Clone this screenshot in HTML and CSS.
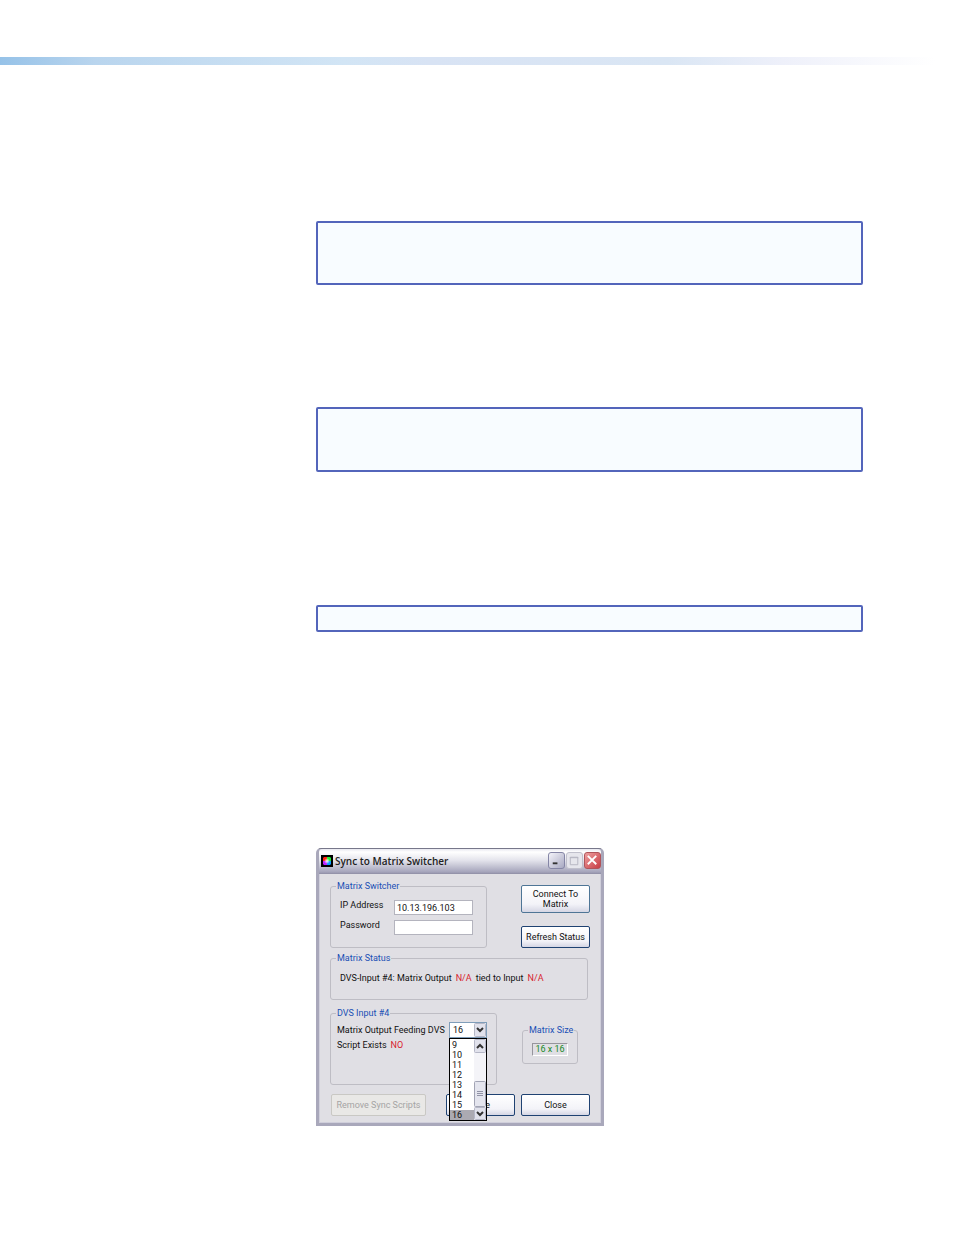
FILE: index.html
```html
<!DOCTYPE html>
<html lang="en">
<head>
    <meta charset="utf-8">
    <meta name="viewport" content="width=device-width, initial-scale=1">
    <title>Sync to Matrix Switcher</title>
    <link rel="stylesheet" href="styles.css">
</head>

<body>
    <div class="page-bar"></div>

    <main class="content">
        <div class="note"></div>
        <div class="note second"></div>
        <div class="note small"></div>

        <section class="dialog" aria-labelledby="dialog-title">
            <header class="titlebar">
                <svg class="app-icon" viewBox="0 0 12 12">
                    <defs>
                        <radialGradient id="glow">
                            <stop offset="0" stop-color="#fff"/>
                            <stop offset="1" stop-color="#fff" stop-opacity="0"/>
                        </radialGradient>
                    </defs>
                    <rect width="12" height="12" fill="#000"/>
                    <path d="M6 6V2H3L2 3v3z" fill="#f21"/>
                    <path d="M6 6V2h3l1 1v3z" fill="#2e3"/>
                    <path d="M6 6H2v3l1 1h3z" fill="#b2f"/>
                    <path d="M6 6h4v3l-1 1H6z" fill="#19f"/>
                    <circle cx="6" cy="6" r="3" fill="url(#glow)"/>
                </svg>
                <h1 id="dialog-title">Sync to Matrix Switcher</h1>
                <div class="window-buttons">
                    <button class="win-btn" type="button" aria-label="Minimize">
                        <svg viewBox="0 0 16 16"><path d="M4 11h5" stroke="#333" stroke-width="2"/></svg>
                    </button>
                    <button class="win-btn maximize" type="button" aria-label="Maximize" disabled>
                        <svg viewBox="0 0 16 16"><path d="M3.5 4.5h8v8h-8zM3 5h9" fill="none" stroke="#b4b4c0"/></svg>
                    </button>
                    <button class="win-btn close" type="button" aria-label="Close window">
                        <svg viewBox="0 0 16 16"><path d="M3 3l9 9M12 3l-9 9" stroke="#fff" stroke-width="2"/></svg>
                    </button>
                </div>
            </header>

            <form class="dialog-body">
                <div class="row">
                    <fieldset class="switcher">
                        <legend>Matrix Switcher</legend>
                        <div class="field">
                            <label for="ip">IP Address</label>
                            <input id="ip" type="text" value="10.13.196.103">
                        </div>
                        <div class="field">
                            <label for="password">Password</label>
                            <input id="password" type="password">
                        </div>
                    </fieldset>
                    <div class="actions">
                        <button class="btn connect" type="button">Connect To Matrix</button>
                        <button class="btn" type="button">Refresh Status</button>
                    </div>
                </div>

                <fieldset class="status">
                    <legend>Matrix Status</legend>
                    <p>
                        <span>DVS-Input #4: Matrix Output</span>
                        <span class="red">N/A</span>
                        <span>tied to Input</span>
                        <span class="red">N/A</span>
                    </p>
                </fieldset>

                <div class="row input-row">
                    <fieldset class="dvs">
                        <legend>DVS Input #4</legend>
                        <div class="feed">
                            <label for="output">Matrix Output Feeding DVS</label>
                            <div class="combo">
                                <select id="output">
                                    <option>16</option>
                                </select>
                                <svg class="combo-arrow" viewBox="0 0 12 14">
                                    <rect x=".5" y=".5" width="11" height="13" rx="1" fill="#e1e2ec" stroke="#b5b7c6"/>
                                    <path d="M3 5l3 3 3-3" fill="none" stroke="#333" stroke-width="2"/>
                                </svg>
                                <div class="dropdown">
                                    <ul role="listbox" aria-label="Matrix output">
                                        <li role="option">9</li>
                                        <li role="option">10</li>
                                        <li role="option">11</li>
                                        <li role="option">12</li>
                                        <li role="option">13</li>
                                        <li role="option">14</li>
                                        <li role="option">15</li>
                                        <li role="option" class="selected" aria-selected="true">16</li>
                                    </ul>
                                    <svg class="scrollbar" viewBox="0 0 12 81">
                                        <rect width="12" height="81" fill="#f4f4f8"/>
                                        <rect x=".5" y=".5" width="11" height="13" rx="1" fill="#e1e2ec" stroke="#b5b7c6"/>
                                        <path d="M3 9l3-3 3 3" fill="none" stroke="#333" stroke-width="2"/>
                                        <rect x=".5" y="42.5" width="11" height="25" rx="1" fill="#e4e5ee" stroke="#a2a4b4"/>
                                        <path d="M3 52.5h6M3 54.5h6M3 56.5h6" stroke="#9193a6"/>
                                        <rect x=".5" y="68.5" width="11" height="12" rx="1" fill="#e1e2ec" stroke="#b5b7c6"/>
                                        <path d="M3 73l3 3 3-3" fill="none" stroke="#333" stroke-width="2"/>
                                    </svg>
                                </div>
                            </div>
                        </div>
                        <p class="script">
                            <span>Script Exists</span>
                            <span class="red">NO</span>
                        </p>
                    </fieldset>
                    <fieldset class="size">
                        <legend>Matrix Size</legend>
                        <output>16 x 16</output>
                    </fieldset>
                </div>

                <div class="row buttons">
                    <button class="btn remove" type="button" disabled>Remove Sync Scripts</button>
                    <button class="btn" type="button">Save</button>
                    <button class="btn" type="button">Close</button>
                </div>
            </form>
        </section>
    </main>
</body>
</html>
```
FILE: styles.css
```css
* {
    box-sizing: border-box;
}

body {
    margin: 0;
    padding-top: 57px;
    background-color: #fff;
    font-family: Roboto, "Liberation Sans", sans-serif;
    font-size: 9px;
    line-height: 10px;
    color: #111;
}

.page-bar {
    height: 8px;
    background: linear-gradient(to right, #96c2e8 0%, #b9d5ee 10%, #d2e5f5 36%, #d8e3f4 45%, #dae6f4 70%, #eef0fa 82%, #fff 98%);
}

.content {
    padding: 156px 91px 109px 316px;
}

/* note boxes */
.note {
    height: 64px;
    margin-bottom: 122px;
    border: 2px solid #5365bb;
    border-radius: 2px;
    background-color: #f8fcff;
}

.note.second {
    height: 65px;
    margin-bottom: 133px;
}

.note.small {
    height: 27px;
    margin-bottom: 216px;
}

/* dialog window */
.dialog {
    width: 288px;
    border: 3px solid #a9a8bb;
    border-top: 1px solid #77778a;
    border-radius: 5px 5px 0 0;
    background-color: #e0dfe4;
    box-shadow: inset 0 0 0 1px #d0cfdb;
}

.titlebar {
    display: flex;
    align-items: center;
    height: 25px;
    padding: 0 0 2px 2px;
    border-radius: 4px 4px 0 0;
    background: linear-gradient(#e8e8f0 0%, #fff 12%, #e4e4ec 45%, #bcbccd 75%, #a5a4bb 92%, #8e8da4 100%);
}

.app-icon {
    width: 12px;
    height: 12px;
}

.titlebar h1 {
    flex: 1;
    margin: 0 0 0 2px;
    font-family: "Open Sans", sans-serif;
    font-size: 10px;
    font-weight: 600;
    line-height: 14px;
    color: #222;
}

.window-buttons {
    display: flex;
    gap: 1px;
}

.win-btn {
    width: 17px;
    height: 17px;
    padding: 0;
    border: 1px solid #8586a6;
    border-radius: 3px;
    background: linear-gradient(135deg, #f4f4fa, #a8a9c2);
}

.win-btn svg {
    display: block;
}

.win-btn.maximize {
    border-color: #c0c0cc;
    background: #e6e6ec;
}

.win-btn.close {
    border-color: #b0545a;
    background: linear-gradient(135deg, #eda0a0, #c83c44);
}

.dialog-body {
    padding: 7px 11px;
}

.row {
    display: flex;
    justify-content: space-between;
}

fieldset {
    min-width: 0;
    margin: 0;
    padding: 0 5px;
    border: 1px solid #bebdc4;
    border-radius: 3px;
}

legend {
    padding: 0 1px;
    color: #1a4fb5;
    white-space: nowrap;
}

p {
    margin: 0;
}

.red {
    color: #d8232f;
}

.switcher {
    width: 157px;
    height: 67px;
}

.field {
    display: flex;
    justify-content: space-between;
    margin: 0 8px 5px 4px;
}

.switcher legend + .field {
    margin-top: 9px;
}

.field input {
    width: 79px;
    height: 15px;
    padding: 0 2px;
    border: 1px solid #b4b4be;
    background-color: #fff;
    font: inherit;
    color: #111;
}

.actions {
    display: flex;
    flex-direction: column;
    justify-content: space-between;
    padding-top: 4px;
}

.btn {
    width: 69px;
    height: 22px;
    padding: 0 4px;
    border: 1px solid #1f4272;
    border-radius: 2px;
    background: linear-gradient(#fff, #f3f3f8 70%, #d5d6e4);
    font: inherit;
    color: #111;
    white-space: nowrap;
}

.btn.connect {
    height: 28px;
    padding: 0 8px;
    border-color: #4e7596;
    white-space: normal;
}

.btn.remove {
    width: 95px;
    border-color: #c9c8c4;
    background: #e9e8e6;
    color: #a5a4a4;
}

.status {
    width: 258px;
    height: 47px;
    margin-top: 5px;
}

.status p {
    display: flex;
    gap: 4px;
    margin: 10px 0 0 4px;
}

.input-row {
    margin-top: 8px;
}

.dvs {
    width: 167px;
    height: 77px;
}

.feed {
    display: flex;
    justify-content: space-between;
    margin: 4px 4px 0 1px;
}

.feed label {
    padding-top: 3px;
}

.combo {
    position: relative;
    width: 38px;
    height: 16px;
}

.combo select {
    display: block;
    width: 38px;
    height: 16px;
    padding: 0 3px;
    appearance: none;
    border: 1px solid #7f9db9;
    border-radius: 0;
    background-color: #fff;
    font: inherit;
    color: #111;
}

.combo-arrow {
    position: absolute;
    top: 1px;
    right: 1px;
    width: 12px;
    height: 14px;
    pointer-events: none;
}

/* opened list, lies over the buttons below */
.dropdown {
    position: absolute;
    top: 16px;
    left: 0;
    z-index: 1;
    display: flex;
    width: 38px;
    border: 1px solid #000;
    background-color: #fff;
}

.dropdown ul {
    flex: 1;
    margin: 0;
    padding: 1px 0 0;
    list-style: none;
}

.dropdown li {
    padding-left: 2px;
}

.dropdown .selected {
    background-color: #abaab2;
}

.scrollbar {
    width: 12px;
    height: 81px;
}

.script {
    display: flex;
    gap: 4px;
    margin: 2px 0 0 1px;
}

.size {
    align-self: flex-start;
    width: 56px;
    height: 39px;
    margin: 17px 12px 0 0;
}

.size output {
    display: block;
    width: 36px;
    height: 13px;
    margin: 8px auto 0;
    border: 1px solid;
    border-color: #96959c #fff #fff #96959c;
    line-height: 11px;
    text-align: center;
    color: #168a24;
}

.buttons {
    margin-top: 9px;
    padding-left: 1px;
}

.buttons .remove {
    margin-right: 14px;
}
```
